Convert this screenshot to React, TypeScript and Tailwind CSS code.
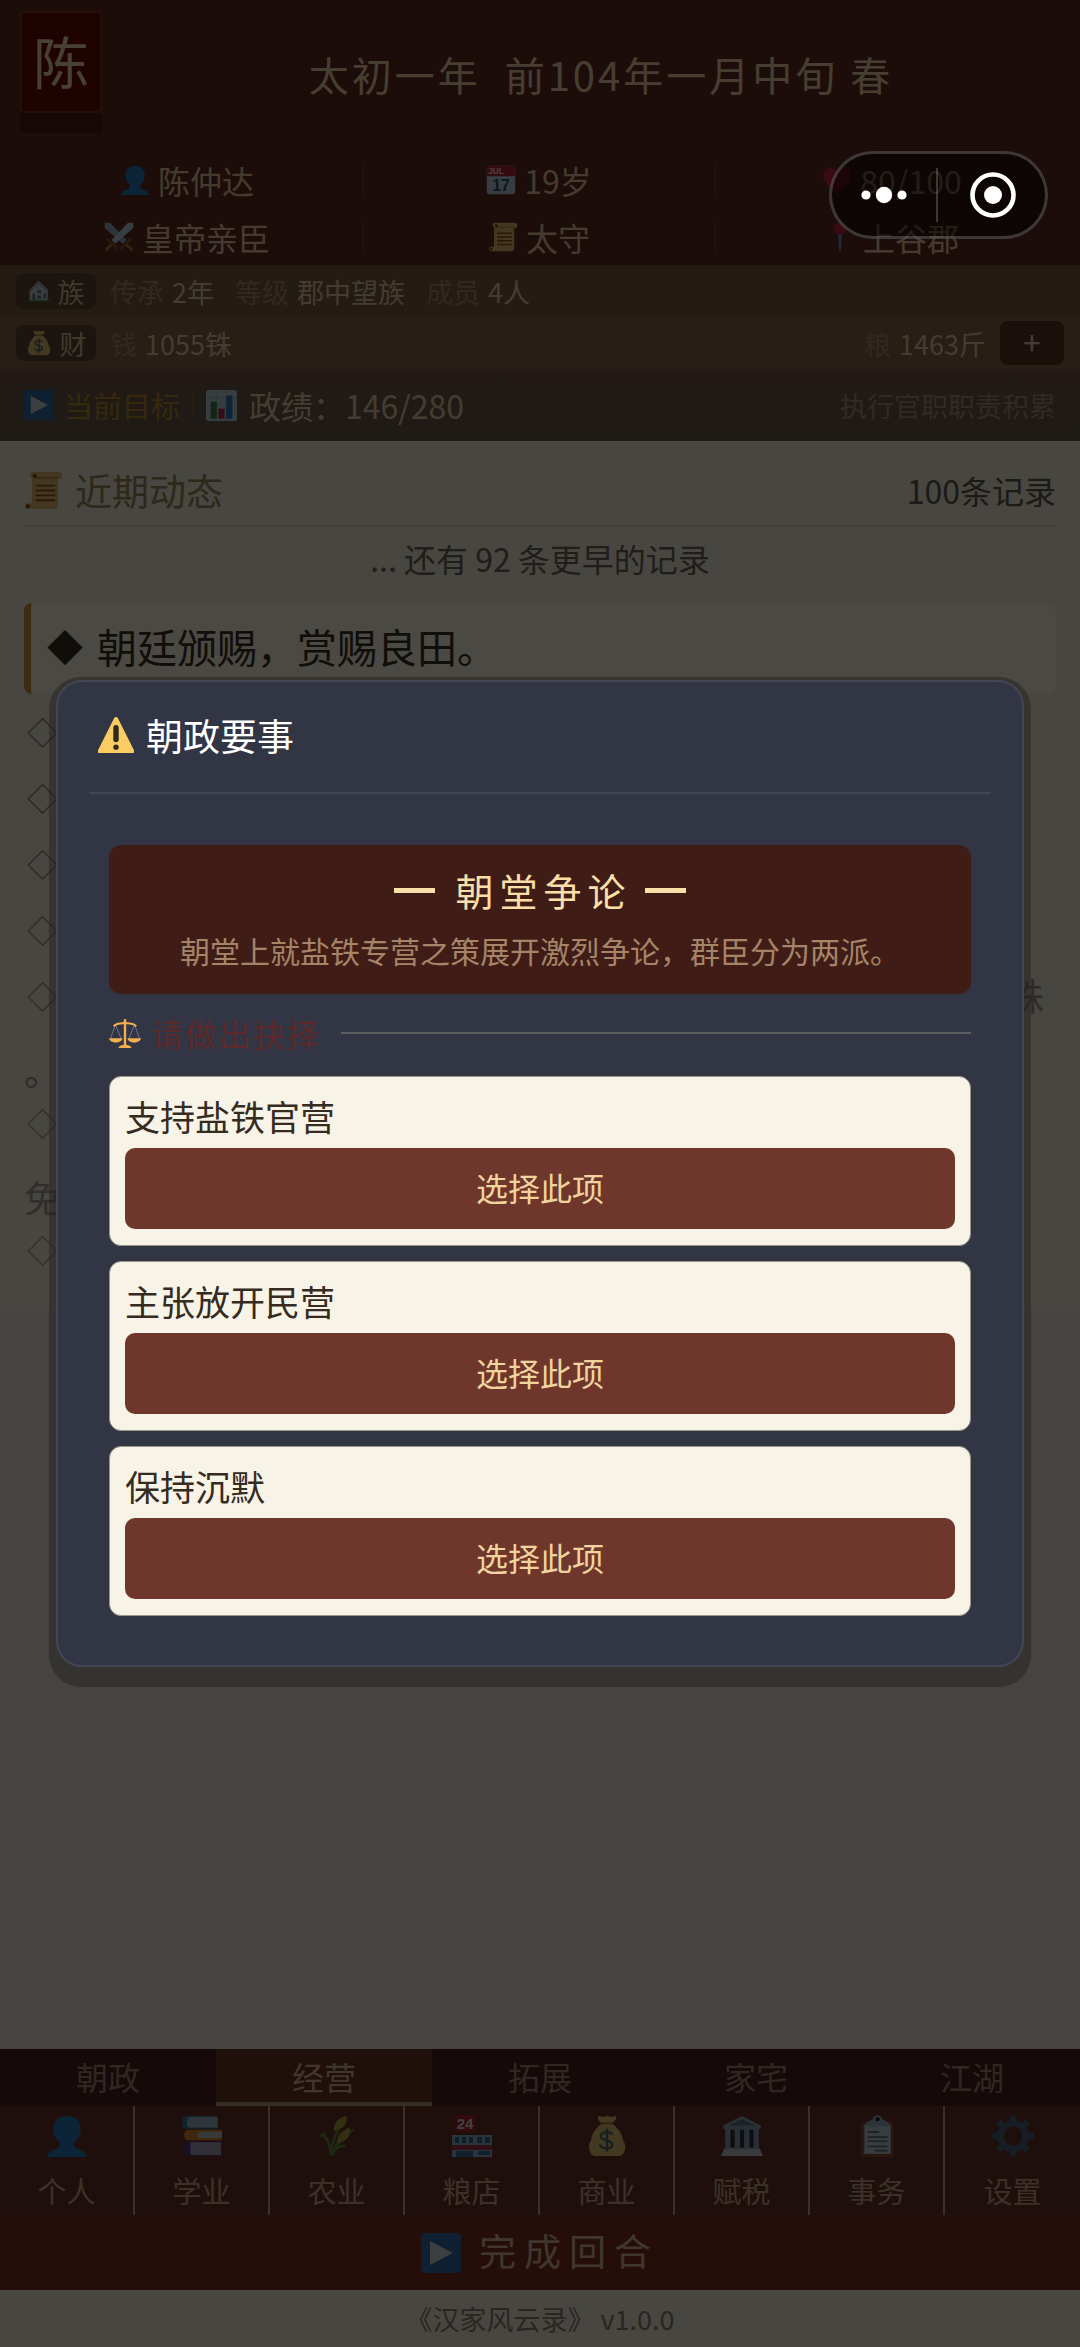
import type { ReactNode } from "react";

type IconProps = { className?: string };

const Person = ({ className }: IconProps) => (
  <svg viewBox="0 0 40 40" className={className} aria-hidden="true">
    <path d="M20 1c8 0 13 5 13 12 0 5-2 10-6 13v4c1 3 11 3 12 10H1c1-7 11-7 12-10v-4c-4-3-6-8-6-13C7 6 12 1 20 1z" fill="#2a7ab8" />
  </svg>
);

const Calendar = ({ className }: IconProps) => (
  <svg viewBox="0 0 40 40" className={className} aria-hidden="true">
    <rect x="1" y="1" width="38" height="38" rx="4" fill="#b9cdd8" />
    <path d="M1 15V5a4 4 0 0 1 4-4h30a4 4 0 0 1 4 4v10z" fill="#b3263f" />
    <text x="3" y="12" fontSize="11" fontWeight="700" fill="#e6dcdc" fontFamily="Liberation Sans">JUL</text>
    <text x="20" y="35" fontSize="21" fontWeight="700" fill="#2f4d66" textAnchor="middle" fontFamily="Liberation Sans">17</text>
  </svg>
);

const Heart = ({ className }: IconProps) => (
  <svg viewBox="0 0 40 40" className={className} aria-hidden="true">
    <path d="M20 37C8 29 2 22 2 13 2 2 16 0 20 10c4-10 18-8 18 3 0 9-6 16-18 24z" fill="#c71f45" />
  </svg>
);

const Swords = ({ className }: IconProps) => (
  <svg viewBox="0 0 40 40" className={className} aria-hidden="true">
    <path d="M1 1h7l22 23-5 5L1 8z" fill="#8fb0c2" />
    <path d="M39 1h-7L10 24l5 5L39 8z" fill="#b4d0df" />
    <path d="M4 22l14 14M36 22L22 36" stroke="#8a5a2e" strokeWidth="3" />
    <path d="M10 30l-8 8M30 30l8 8" stroke="#b07a35" strokeWidth="4" />
  </svg>
);

const Scroll = ({ className }: IconProps) => (
  <svg viewBox="0 0 40 40" className={className} aria-hidden="true">
    <path d="M9 1h27c4 0 4 7 1 7h-2v27c0 3-2 4-4 4H4c-4 0-4-6 0-6h4V7C5 6 6 1 9 1z" fill="#e3b768" />
    <path d="M11 7h24" stroke="#b78b45" strokeWidth="1.5" />
    <path d="M12 15h20M12 20h20M12 25h20M12 30h20" stroke="#8c4f28" strokeWidth="2" />
    <circle cx="11" cy="5" r="2" fill="#6e3a20" />
    <circle cx="4" cy="36" r="2" fill="#6e3a20" />
  </svg>
);

const Pin = ({ className }: IconProps) => (
  <svg viewBox="0 0 40 40" className={className} aria-hidden="true">
    <path d="M17 16h6l-2 23h-2z" fill="#6f8591" />
    <circle cx="20" cy="9" r="8" fill="#c71f45" />
  </svg>
);

const House = ({ className }: IconProps) => (
  <svg viewBox="0 0 40 40" className={className} aria-hidden="true">
    <path d="M3 20L19 2l17 16v20H3z" fill="#c4ced4" />
    <path d="M19 1l18 17-3 3L19 8 5 22l-3-3z" fill="#9aabb2" />
    <path d="M8 25h5v12H8zM17 18h7v6h-7zM17 28h7v6h-7zM28 24h5v9h-5z" fill="#5d7887" />
    <path d="M1 36h38v3H1z" fill="#5f9150" />
  </svg>
);

const MoneyBag = ({ className }: IconProps) => (
  <svg viewBox="0 0 40 40" className={className} aria-hidden="true">
    <path d="M12 1l4 1 4-1 4 1 4-1c2 3-1 5-3 7 5 4 10 10 10 16 4 4 3 15-4 15H9c-6 0-8-11-4-15 0-6 5-12 10-16-2-2-5-4-3-7z" fill="#dfc06c" />
    <path d="M14 8h12" stroke="#a8742c" strokeWidth="2" />
    <path d="M25 19c-1-3-10-4-11 1-1 5 11 3 11 8 0 5-10 5-12 0M20 13v22" stroke="#51686b" strokeWidth="2.4" fill="none" />
  </svg>
);

const Play = ({ className }: IconProps) => (
  <svg viewBox="0 0 40 40" className={className} aria-hidden="true">
    <rect width="40" height="40" rx="4" fill="#2f6da8" />
    <path d="M9 8v24l23-12z" fill="#c9cfd3" />
  </svg>
);

const Chart = ({ className }: IconProps) => (
  <svg viewBox="0 0 40 40" className={className} aria-hidden="true">
    <rect width="40" height="40" rx="4" fill="#bccdd8" />
    <path d="M0 10h40M0 20h40M0 30h40M13 0v40M26 0v40" stroke="#98afbd" strokeWidth="1" />
    <path d="M6 15h8v22H6z" fill="#3b8049" />
    <path d="M16 24h8v13h-8z" fill="#b02e46" />
    <path d="M26 7h8v30h-8z" fill="#2b79bd" />
  </svg>
);

const Warning = ({ className }: IconProps) => (
  <svg viewBox="0 0 40 40" className={className} aria-hidden="true">
    <path d="M18 1a2.5 2.5 0 0 1 4 0l18 36c1 2 0 3-2 3H2c-2 0-3-1-2-3z" fill="#fbcc63" />
    <path d="M17 12a3 3 0 0 1 6 0v13a3 3 0 0 1-6 0z" fill="#2f2a1c" />
    <circle cx="20" cy="33.500" r="3" fill="#2f2a1c" />
  </svg>
);

const Scales = ({ className }: IconProps) => (
  <svg viewBox="0 0 40 38" className={className} aria-hidden="true">
    <path d="M8 8L2 25M8 8l7 17M32 8l-7 17M32 8l6 17" stroke="#76889a" strokeWidth="1" />
    <path d="M6 10c4-5 9-2 14-5 5 3 10 0 14 5" stroke="#f4b04f" strokeWidth="2.5" fill="none" />
    <path d="M20 1v33" stroke="#f4b04f" strokeWidth="3" />
    <path d="M0 25h17c-1 7-16 7-17 0zM23 25h17c-1 7-16 7-17 0zM12 37c0-3 5-4 8-4s8 1 8 4z" fill="#f4b04f" />
  </svg>
);

const Books = ({ className }: IconProps) => (
  <svg viewBox="0 0 40 40" className={className} aria-hidden="true">
    <path d="M4 1h31v12H4c-4 0-4-12 0-12z" fill="#2f78a5" />
    <path d="M8 2h27v10H8c-3 0-3-10 0-10z" fill="#9fb6c3" />
    <path d="M6 14h33v10H6c-4 0-4-10 0-10z" fill="#d5842c" />
    <path d="M18 16h21v6H18c-3 0-3-6 0-6z" fill="#bcc3c3" />
    <path d="M6 25h32v14H6c-4 0-4-14 0-14z" fill="#56397d" />
    <path d="M9 26h29v12H9z" fill="#a6a5b7" />
  </svg>
);

const Wheat = ({ className }: IconProps) => (
  <svg viewBox="0 0 40 40" className={className} aria-hidden="true">
    <path d="M14 39C15 27 18 19 22 12M16 38c2-9 6-13 11-17M14 39C14 27 10 22 6 17M8 18c-2 0-3 1-4 3M16 36c3-5 7-7 12-6M27 21c4-4 6-6 9-7" stroke="#5a8a3a" strokeWidth="2.6" fill="none" />
    <path d="M17 15c0-7 4-13 12-14 2 7-3 13-12 14zM20 27c0-7 4-12 12-15 2 7-3 14-12 15z" fill="#b09a3d" />
  </svg>
);

const Store = ({ className }: IconProps) => (
  <svg viewBox="0 0 40 42" className={className} aria-hidden="true">
    <rect x="3" width="20" height="17" rx="2" fill="#a52237" />
    <text x="13" y="14" fontSize="15" fontWeight="700" fill="#ddd" textAnchor="middle" fontFamily="Liberation Sans">24</text>
    <path d="M0 20h40v22H0z" fill="#8fb0c2" />
    <path d="M3 22h4v6H3zM10 22h4v6h-4zM17 22h4v6h-4zM25 22h5v6h-5zM33 22h5v6h-5z" fill="#326a91" />
    <path d="M0 30h40v5H0z" fill="#a52e44" />
    <path d="M4 36h17v6H4zM26 36h12v4H26z" fill="#326a91" />
  </svg>
);

const Bank = ({ className }: IconProps) => (
  <svg viewBox="0 0 40 40" className={className} aria-hidden="true">
    <path d="M20 1l18 9v3H2v-3zM4 13h32v19H4z" fill="#899fae" />
    <path d="M20 4l13 6H7z" fill="#607681" />
    <path d="M9 14h4v17H9zM18 14h4v17h-4zM27 14h4v17h-4z" fill="#27343d" />
    <path d="M3 32h34l3 7H0z" fill="#b7c6cf" />
  </svg>
);

const Clipboard = ({ className }: IconProps) => (
  <svg viewBox="0 0 40 40" className={className} aria-hidden="true">
    <rect x="5" y="6" width="31" height="34" rx="2" fill="#8b4a37" />
    <path d="M8 9h25v28H8z" fill="#bac8d2" />
    <path d="M11 16h11M11 21h19M11 25h19M11 30h19M18 34h12" stroke="#56697a" strokeWidth="1.6" />
    <path d="M10 11V7l6-3c1-5 8-5 9 0l6 3v4z" fill="#98adb9" />
    <circle cx="20.500" cy="4" r="2" fill="#1d2429" />
  </svg>
);

const Gear = ({ className }: IconProps) => (
  <svg viewBox="0 0 40 40" className={className} aria-hidden="true">
    <circle cx="20" cy="20" r="12" fill="none" stroke="#47647a" strokeWidth="6" />
    <g stroke="#47647a" strokeWidth="6" strokeLinecap="round">
      <path d="M20 3v4M20 33v4M3 20h4M33 20h4M8 8l3 3M29 29l3 3M32 8l-3 3M11 29l-3 3" />
    </g>
  </svg>
);

const stats = [
  { icon: Person, text: "陈仲达" },
  { icon: Calendar, text: "19岁" },
  { icon: Heart, text: "80/100" },
  { icon: Swords, text: "皇帝亲臣" },
  { icon: Scroll, text: "太守" },
  { icon: Pin, text: "上谷郡" },
];

const entries = [
  { mark: "◇", tone: "text-[#827d70]" },
  { mark: "◇", tone: "text-[#868174]" },
  { mark: "◇", tone: "text-[#8c877a]" },
  { mark: "◇", tone: "text-[#948f82]" },
  { mark: "◇", tail: "铢", rest: "。", tone: "text-[#9a9588]" },
  { mark: "◇", rest: "免", tone: "text-[#a29d90]" },
  { mark: "◇", tone: "text-[#a8a396]" },
];

const choices = ["支持盐铁官营", "主张放开民营", "保持沉默"];

const tabs = ["朝政", "经营", "拓展", "家宅", "江湖"];

const menu = [
  { icon: Person, text: "个人" },
  { icon: Books, text: "学业" },
  { icon: Wheat, text: "农业" },
  { icon: Store, text: "粮店" },
  { icon: MoneyBag, text: "商业" },
  { icon: Bank, text: "赋税" },
  { icon: Clipboard, text: "事务" },
  { icon: Gear, text: "设置" },
];

const Chip = ({ icon, children }: { icon: ReactNode; children: ReactNode }) => (
  <span className="flex h-9 w-20 items-center justify-center gap-2 rounded-lg bg-[#5c4335] text-[#d6bd98]">
    {icon}
    {children}
  </span>
);

const Field = ({ label, value }: { label: string; value: string }) => (
  <span className="flex gap-2">
    <span className="text-[#a98868]">{label}</span>
    <span className="text-[#e2c9a3]">{value}</span>
  </span>
);

const Header = () => (
  <header className="bg-[#5e2b24]">
    <div className="flex h-[151px] items-center pl-5">
      <div className="mt-[11px] flex h-[102px] w-[82px] shrink-0 items-center justify-center self-start rounded border-2 border-[#7a3527] bg-[#690a06] pb-1 text-[56px] leading-none text-[#f0d8ac] shadow-[0_20px_0_0_#4f1c19]">
        陈
      </div>
      <h1 className="flex-1 whitespace-pre pb-1 pl-5 text-center text-[40px] leading-none tracking-[3px] text-[#e8cfa6]">
        太初一年  前104年一月中旬 春
      </h1>
    </div>
    <ul className="grid grid-cols-3 px-3 text-[32px] leading-none text-[#e2c69f]">
      {stats.map(({ icon: Icon, text }, i) => (
        <li key={text} className="flex h-[57px] items-center">
          <span className={`flex h-[34px] flex-1 items-center justify-center gap-2 ${i % 3 < 2 ? "border-r-2 border-[#703a30]" : ""}`}>
            <Icon className="size-[30px]" />
            {text}
          </span>
        </li>
      ))}
    </ul>
  </header>
);

const InfoBars = () => (
  <section className="text-[27px] leading-none">
    <div className="flex h-[52px] items-center bg-[#7a5b3f] px-4">
      <Chip icon={<House className="size-[22px]" />}>族</Chip>
      <div className="flex gap-[21px] pl-[14px]">
        <Field label="传承" value="2年" />
        <Field label="等级" value="郡中望族" />
        <Field label="成员" value="4人" />
      </div>
    </div>
    <div className="flex h-[52px] items-center bg-[#85644b] px-4">
      <Chip icon={<MoneyBag className="size-[26px]" />}>财</Chip>
      <div className="flex flex-1 justify-between pl-[14px] pr-[14px]">
        <Field label="钱" value="1055铢" />
        <Field label="粮" value="1463斤" />
      </div>
      <button type="button" aria-label="+" className="flex h-11 w-16 items-center justify-center rounded-lg bg-[#5a3529] pb-1 text-[32px] text-[#e2c9a3]">
        +
      </button>
    </div>
    <div className="flex h-[72px] items-center bg-linear-to-b from-[#755347] via-[#6b5848] to-[#675a49] px-6">
      <Play className="size-[30px]" />
      <span className="pl-[10px] text-[29px] text-[#b28a2c]">当前目标</span>
      <span className="mx-3 h-7 w-[2px] bg-[#7d6a58]" />
      <Chart className="size-[31px]" />
      <span className="pl-3 text-[32px] text-[#e2caa8]">政绩：146/280</span>
      <span className="ml-auto text-[#a68c75]">执行官职职责积累</span>
    </div>
  </section>
);

const Feed = () => (
  <section className="bg-[#f0e9d9] px-6 pb-7 pt-[25px]">
    <div className="flex items-center justify-between border-b-2 border-[#ddd5c5] pb-[11px] leading-[48px]">
      <h2 className="flex items-center gap-3 text-[37px] text-[#9c8659]">
        <Scroll className="size-[39px]" />
        近期动态
      </h2>
      <span className="text-[32px] text-[#5f5748]">100条记录</span>
    </div>
    <p className="pt-[9px] text-center text-[32px] leading-[44px] text-[#6c6457]">... 还有 92 条更早的记录</p>
    <p className="mt-[23px] flex gap-[14px] rounded-lg border-l-[7px] border-[#cc9038] bg-[#f8f3df] pb-[18px] pl-4 pt-[14px] text-[40px] leading-[59px] text-[#3a3022]">
      <span className="text-[36px]">◆</span>
      朝廷颁赐，赏赐良田。
    </p>
    <ul className="mt-1 text-[37px]">
      {entries.map(({ mark, tail, rest, tone }, i) => (
        <li key={i} className={tone}>
          <div className="flex justify-between pl-[3px] pr-3 leading-[66px]">
            <span className="text-[31px]">{mark}</span>
            <span>{tail}</span>
          </div>
          {rest && <div className="h-[61px] pt-6 leading-[37px]">{rest}</div>}
        </li>
      ))}
    </ul>
  </section>
);

const BottomNav = () => (
  <nav>
    <div className="grid grid-cols-5">
      {tabs.map((tab) => (
        <button
          key={tab}
          type="button"
          className={`h-[57px] border-b-4 text-[32px] leading-none ${
            tab === "经营" ? "border-[#b09d74] bg-[#6c362a] text-[#d8b892]" : "border-[#46221e] bg-[#46221e] text-[#a6826f]"
          }`}
        >
          {tab}
        </button>
      ))}
    </div>
    <div className="grid grid-cols-8 bg-[#68352a]">
      {menu.map(({ icon: Icon, text }) => (
        <button
          key={text}
          type="button"
          className="flex h-[109px] flex-col items-center gap-[18px] border-r-2 border-[#b8a091] pt-[9px] text-[29px] leading-[30px] text-[#c4a488] last:border-r-0"
        >
          <Icon className="size-[42px]" />
          {text}
        </button>
      ))}
    </div>
    <button type="button" className="flex h-[75px] w-full items-center justify-center gap-[18px] bg-[#7c2c1f] text-[37px] leading-none tracking-[8px] text-[#d8b794]">
      <Play className="size-10" />
      <span className="pb-1">完成回合</span>
    </button>
  </nav>
);

const CourtDialog = () => (
  <div className="absolute inset-0 flex items-center justify-center bg-black/70 px-[49px] pt-[17px]">
    <div className="w-full rounded-[32px] bg-[#25221d]/50 px-[7px] pb-5 pt-[3px]">
      <div role="dialog" aria-labelledby="court-title" className="rounded-[26px] border-2 border-[#444654] bg-[#323544] px-[31px] pb-[49px] pt-[29px]">
        <h2 id="court-title" className="flex items-center gap-3 border-b-2 border-[#424554] pb-[33px] pl-[9px] text-[37px] leading-[48px] text-white">
          <Warning className="size-9" />
          朝政要事
        </h2>
        <div className="px-5 pt-[51px]">
          <div className="rounded-xl bg-[#3f1d16] pb-[22px] pt-[18px] text-center">
            <h3 className="flex items-center justify-center gap-5 text-[38px] leading-[54px] text-[#f9dfa8]">
              <span className="h-[5px] w-[41px] bg-[#f9dfa8]" />
              <span className="-mr-[7px] tracking-[6px]">朝堂争论</span>
              <span className="h-[5px] w-[41px] bg-[#f9dfa8]" />
            </h3>
            <p className="pt-[11px] text-[30px] leading-[44px] text-[#a58468]">朝堂上就盐铁专营之策展开激烈争论，群臣分为两派。</p>
          </div>
          <div className="flex items-center pt-[19px] leading-10">
            <Scales className="h-[31px] w-8" />
            <span className="pl-[10px] text-[32px] tracking-[2px] text-[#5c2a2b]">请做出抉择</span>
            <span className="ml-5 h-[2px] flex-1 bg-[#5d5e62]" />
          </div>
          <ul className="flex flex-col gap-[15px] pt-[23px]">
            {choices.map((choice) => (
              <li key={choice} className="rounded-xl border border-[#99958a] bg-[#f8f3e7] px-[15px] pb-4 pt-[15px]">
                <p className="pb-2 text-[35px] leading-[48px] text-[#352b1f]">{choice}</p>
                <button type="button" className="h-[81px] w-full rounded-[10px] bg-[#6f372b] pb-1 text-[32px] leading-none text-[#f0d4a0]">
                  选择此项
                </button>
              </li>
            ))}
          </ul>
        </div>
      </div>
    </div>
  </div>
);

const Capsule = () => (
  <div className="absolute right-8 top-[151px] flex h-[88px] w-[219px] items-center rounded-full border-[3px] border-white/20 bg-black/50">
    <button type="button" aria-label="更多" className="flex flex-1 justify-center">
      <svg viewBox="0 0 46 18" className="h-[18px] w-[46px]" fill="white">
        <circle cx="5" cy="9" r="4.600" />
        <circle cx="23" cy="9" r="8.200" />
        <circle cx="41" cy="9" r="4.600" />
      </svg>
    </button>
    <span className="h-[54px] w-[2px] bg-white/20" />
    <button type="button" aria-label="关闭" className="flex flex-1 justify-center pl-1">
      <svg viewBox="0 0 46 46" className="size-[46px]">
        <circle cx="23" cy="23" r="20.500" fill="none" stroke="white" strokeWidth="4.600" />
        <circle cx="23" cy="23" r="9" fill="white" />
      </svg>
    </button>
  </div>
);

export default function App() {
  return (
    <div className="relative flex min-h-screen flex-col bg-[#e8e3d7] font-['Noto_Sans_CJK_SC',sans-serif]">
      <Header />
      <InfoBars />
      <main className="flex-1">
        <Feed />
      </main>
      <BottomNav />
      <footer className="bg-[#f0e9d9] text-center text-[27px] leading-[57px] text-[#8a8172]">《汉家风云录》 v1.0.0</footer>
      <CourtDialog />
      <Capsule />
    </div>
  );
}
